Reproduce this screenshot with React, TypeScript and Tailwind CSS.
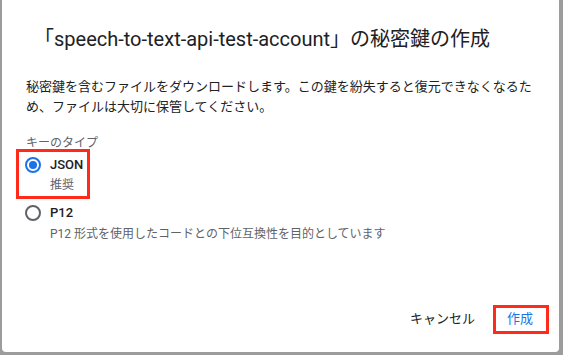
import React from "react";

const font = { fontFamily: "Roboto, 'Noto Sans CJK JP', sans-serif" };

function Radio({ checked }: { checked?: boolean }) {
  return (
    <span
      className={
        "w-4 h-4 -ml-px rounded-full border-2 flex items-center justify-center shrink-0 " +
        (checked ? "border-[#1a73e8]" : "border-[#5f6368]")
      }
    >
      {checked && <span className="w-2 h-2 rounded-full bg-[#1a73e8]" />}
    </span>
  );
}

export default function App() {
  return (
    <div className="w-[563px] h-[355px] bg-[#9c9c9c] pl-[2px] pr-[4px] pb-[3px]" style={font}>
      <div className="relative h-full bg-white rounded-b-[4px] flex flex-col pl-6 pr-[18px] pt-[25px] pb-[15px]">
        <h1 className="text-[20px] leading-[28px] text-[#202124] font-normal ml-2">
          「speech-to-text-api-test-account」の秘密鍵の作成
        </h1>
        <p className="mt-6 text-[13px] leading-[20px] text-[#202124] pr-1">
          秘密鍵を含むファイルをダウンロードします。この鍵を紛失すると復元できなくなるため、ファイルは大切に保管してください。
        </p>
        <div className="mt-[18px] text-[12px] leading-[16px] text-[#5f6368]">キーのタイプ</div>
        <div className="mt-1 flex flex-col">
          <div className="flex items-center h-5 gap-[9px]">
            <Radio checked />
            <span className="text-[13px] font-medium text-[#202124]">JSON</span>
          </div>
          <div className="ml-6 mt-[2px] text-[12px] leading-[16px] text-[#5f6368]">推奨</div>
          <div className="mt-[10px] flex items-center h-5 gap-[9px]">
            <Radio />
            <span className="text-[13px] font-medium text-[#202124]">P12</span>
          </div>
          <div className="ml-6 mt-[3px] text-[12px] leading-[16px] text-[#5f6368]">
            P12 形式を使用したコードとの下位互換性を目的としています
          </div>
        </div>
        <div className="mt-auto flex justify-end items-center gap-4">
          <button className="h-9 px-2 text-[13px] text-[#202124]">キャンセル</button>
          <button className="h-9 px-2 text-[13px] text-[#1a73e8]">作成</button>
        </div>
        <div className="absolute left-[14px] top-[149px] w-[74px] h-[50px] border-[3px] border-[#ff2a1a]" />
        <div className="absolute left-[491px] top-[305px] w-[56px] h-[29px] border-[3px] border-[#ff2a1a]" />
      </div>
    </div>
  );
}
